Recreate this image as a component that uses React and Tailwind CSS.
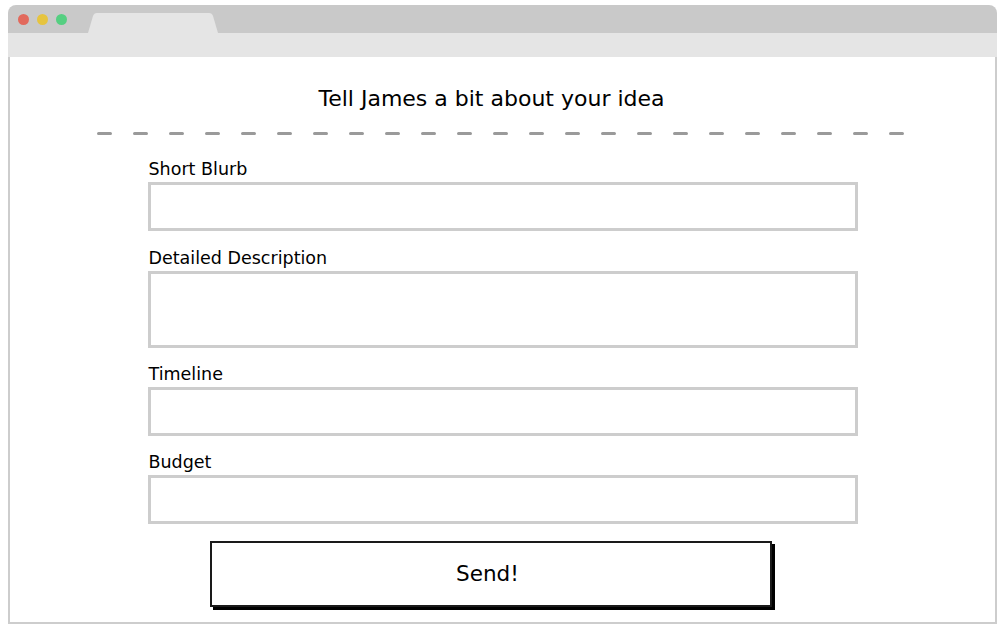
import React from "react";

function Field({ label, h, mt }) {
  return (
    <div className={mt}>
      <div className="h-[24px] leading-[26px] text-[17.5px] text-black pl-px">{label}</div>
      <div className={`mt-[2px] w-[710px] ${h} border-[3px] border-[#cdcdcd] bg-white`} />
    </div>
  );
}

export default function App() {
  return (
    <div className="w-[1003px] h-[635px] bg-white pt-[5px] pl-[8px]" style={{ fontFamily: "'DejaVu Sans', sans-serif" }}>
      <div className="w-[989px]">
        <div className="relative h-[28px] bg-[#c9c9c9] rounded-t-[8px] flex items-center pl-[10px] gap-[8px]">
          <span className="w-[11px] h-[11px] rounded-full bg-[#e2695c]" />
          <span className="w-[11px] h-[11px] rounded-full bg-[#e6c43f]" />
          <span className="w-[11px] h-[11px] rounded-full bg-[#55cf81]" />
          <svg className="absolute left-[80px] top-[8px]" width="132" height="20" viewBox="0 0 132 20">
            <path d="M0 20 L5 3 Q6 0 9 0 L121 0 Q124 0 125 3 L130 20 Z" fill="#e5e5e5" />
          </svg>
        </div>
        <div className="h-[24px] bg-[#e5e5e5]" />
        <div className="h-[567px] border-x-2 border-b-2 border-[#cdcdcd] flex flex-col items-center">
          <div className="mt-[27px] h-[28px] leading-[30px] text-[22px] text-black mr-[22px]">Tell James a bit about your idea</div>
          <svg className="mt-[20px] mr-[2px]" width="810" height="3" viewBox="0 0 810 3">
            <line x1="1.5" y1="1.5" x2="808" y2="1.5" stroke="#9a9a9a" strokeWidth="3" strokeLinecap="round" strokeDasharray="12 24" />
          </svg>
          <div className="mt-[21px] flex flex-col items-start">
            <Field label="Short Blurb" h="h-[49px]" mt="" />
            <Field label="Detailed Description" h="h-[77px]" mt="mt-[14px]" />
            <Field label="Timeline" h="h-[49px]" mt="mt-[13px]" />
            <Field label="Budget" h="h-[49px]" mt="mt-[13px]" />
          </div>
          <button className="mt-[17px] mr-[24px] w-[562px] h-[66px] border-2 border-[#1a1a1a] bg-white shadow-[3px_3px_0_#000] text-[21.5px] text-black flex items-center justify-center">
            <span className="mr-[6px]">Send!</span>
          </button>
        </div>
      </div>
    </div>
  );
}
